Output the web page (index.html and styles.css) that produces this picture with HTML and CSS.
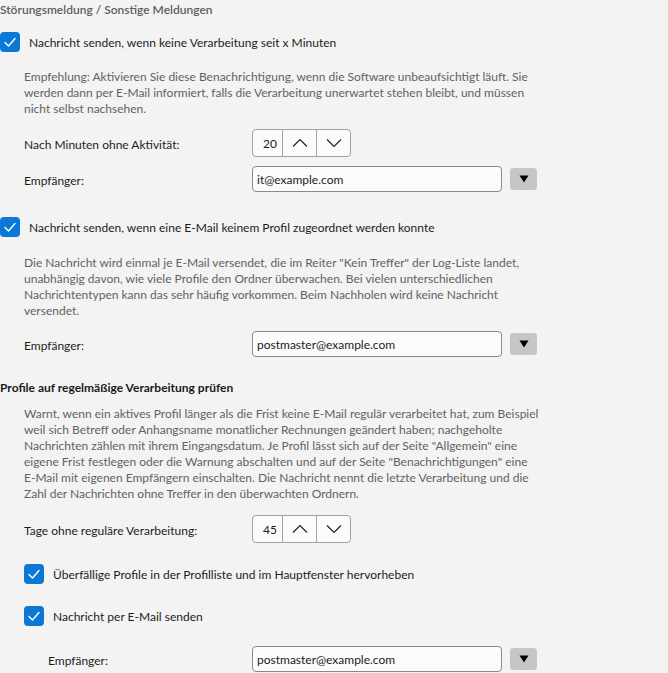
FILE: index.html
```html
<!DOCTYPE html>
<html lang="de">
<head>
<meta charset="utf-8">
<title>Störungsmeldung</title>
<link rel="stylesheet" href="styles.css">
</head>
<body>
<div class="page">
  <div class="title">Störungsmeldung / Sonstige Meldungen</div>

  <div class="check c1">
    <span class="box"><svg viewBox="0 0 20 20" width="20" height="20"><polyline points="5,10.5 8.5,14 15,6.5" fill="none" stroke="#fff" stroke-width="1.4" stroke-linecap="round" stroke-linejoin="round"/></svg></span>
    <span class="clabel">Nachricht senden, wenn keine Verarbeitung seit x Minuten</span>
  </div>

  <p class="note n1">Empfehlung: Aktivieren Sie diese Benachrichtigung, wenn die Software unbeaufsichtigt läuft. Sie<br>werden dann per E-Mail informiert, falls die Verarbeitung unerwartet stehen bleibt, und müssen<br>nicht selbst nachsehen.</p>

  <div class="field f-spin1">
    <span class="flabel">Nach Minuten ohne Aktivität:</span>
    <div class="spin">
      <span class="num">20</span>
      <span class="arrow"><svg viewBox="0 0 16 10" width="16" height="10"><polyline points="1,8.5 8,1.5 15,8.5" fill="none" stroke="#222" stroke-width="1.2"/></svg></span>
      <span class="arrow"><svg viewBox="0 0 16 10" width="16" height="10"><polyline points="1,1.5 8,8.5 15,1.5" fill="none" stroke="#222" stroke-width="1.2"/></svg></span>
    </div>
  </div>

  <div class="field f-rec1">
    <span class="flabel">Empfänger:</span>
    <div class="combo">
      <div class="input">it@example.com</div>
      <span class="ddbtn"><svg viewBox="0 0 10 8" width="10" height="8"><polygon points="0.5,0.5 9.5,0.5 5,7.5" fill="#000"/></svg></span>
    </div>
  </div>

  <div class="check c2">
    <span class="box"><svg viewBox="0 0 20 20" width="20" height="20"><polyline points="5,10.5 8.5,14 15,6.5" fill="none" stroke="#fff" stroke-width="1.4" stroke-linecap="round" stroke-linejoin="round"/></svg></span>
    <span class="clabel">Nachricht senden, wenn eine E-Mail keinem Profil zugeordnet werden konnte</span>
  </div>

  <p class="note n2">Die Nachricht wird einmal je E-Mail versendet, die im Reiter "Kein Treffer" der Log-Liste landet,<br>unabhängig davon, wie viele Profile den Ordner überwachen. Bei vielen unterschiedlichen<br>Nachrichtentypen kann das sehr häufig vorkommen. Beim Nachholen wird keine Nachricht<br>versendet.</p>

  <div class="field f-rec2">
    <span class="flabel">Empfänger:</span>
    <div class="combo">
      <div class="input">postmaster@example.com</div>
      <span class="ddbtn"><svg viewBox="0 0 10 8" width="10" height="8"><polygon points="0.5,0.5 9.5,0.5 5,7.5" fill="#000"/></svg></span>
    </div>
  </div>

  <div class="heading">Profile auf regelmäßige Verarbeitung prüfen</div>

  <p class="note n3">Warnt, wenn ein aktives Profil länger als die Frist keine E-Mail regulär verarbeitet hat, zum Beispiel<br>weil sich Betreff oder Anhangsname monatlicher Rechnungen geändert haben; nachgeholte<br>Nachrichten zählen mit ihrem Eingangsdatum. Je Profil lässt sich auf der Seite "Allgemein" eine<br>eigene Frist festlegen oder die Warnung abschalten und auf der Seite "Benachrichtigungen" eine<br>E-Mail mit eigenen Empfängern einschalten. Die Nachricht nennt die letzte Verarbeitung und die<br>Zahl der Nachrichten ohne Treffer in den überwachten Ordnern.</p>

  <div class="field f-spin2">
    <span class="flabel">Tage ohne reguläre Verarbeitung:</span>
    <div class="spin">
      <span class="num">45</span>
      <span class="arrow"><svg viewBox="0 0 16 10" width="16" height="10"><polyline points="1,8.5 8,1.5 15,8.5" fill="none" stroke="#222" stroke-width="1.2"/></svg></span>
      <span class="arrow"><svg viewBox="0 0 16 10" width="16" height="10"><polyline points="1,1.5 8,8.5 15,1.5" fill="none" stroke="#222" stroke-width="1.2"/></svg></span>
    </div>
  </div>

  <div class="check c3 indent">
    <span class="box"><svg viewBox="0 0 20 20" width="20" height="20"><polyline points="5,10.5 8.5,14 15,6.5" fill="none" stroke="#fff" stroke-width="1.4" stroke-linecap="round" stroke-linejoin="round"/></svg></span>
    <span class="clabel">Überfällige Profile in der Profilliste und im Hauptfenster hervorheben</span>
  </div>

  <div class="check c4 indent">
    <span class="box"><svg viewBox="0 0 20 20" width="20" height="20"><polyline points="5,10.5 8.5,14 15,6.5" fill="none" stroke="#fff" stroke-width="1.4" stroke-linecap="round" stroke-linejoin="round"/></svg></span>
    <span class="clabel">Nachricht per E-Mail senden</span>
  </div>

  <div class="field f-rec3 deep">
    <span class="flabel">Empfänger:</span>
    <div class="combo">
      <div class="input">postmaster@example.com</div>
      <span class="ddbtn"><svg viewBox="0 0 10 8" width="10" height="8"><polygon points="0.5,0.5 9.5,0.5 5,7.5" fill="#000"/></svg></span>
    </div>
  </div>
</div>
</body>
</html>
```

FILE: styles.css
```css
html, body {
  margin: 0;
  padding: 0;
  background: #f3f3f3;
}
body {
  font-family: Lato, "Open Sans", sans-serif;
  font-size: 12px;
  color: #1c1c1c;
  width: 668px;
  height: 673px;
  overflow: hidden;
}
.page {
  display: flex;
  flex-direction: column;
}
.title {
  padding-top: 2px;
  line-height: 16px;
  height: 16px;
  font-weight: 600;
  color: #5e5e5e;
}
.check {
  display: flex;
  align-items: center;
  height: 20px;
  line-height: 20px;
}
.check .box {
  width: 20px;
  height: 20px;
  border-radius: 4px;
  background: #0a78d4;
  display: flex;
  flex: none;
}
.check .clabel {
  margin-left: 9px;
  padding-top: 2px;
  white-space: nowrap;
}
.check.indent {
  padding-left: 24px;
}
.c1 { margin-top: 14px; }
.c2 { margin-top: 25px; }
.c3 { margin-top: 21px; }
.c4 { margin-top: 22px; }

.note {
  margin: 0;
  padding: 1px 0 0 24px;
  line-height: 16px;
  color: #626262;
  white-space: nowrap;
}
.n1 { margin-top: 16px; }
.n2 { margin-top: 17px; }
.n3 { margin-top: 9px; }

.heading {
  margin-top: 22px;
  padding-top: 1px;
  line-height: 16px;
  height: 16px;
  font-weight: 700;
  color: #1a1a1a;
}

.field {
  display: flex;
  align-items: center;
  padding-left: 24px;
}
.field .flabel {
  width: 228px;
  flex: none;
  padding-top: 2px;
  white-space: nowrap;
}
.field.deep {
  padding-left: 48px;
}
.field.deep .flabel {
  width: 204px;
}
.f-spin1 { margin-top: 12px; }
.f-rec1 { margin-top: 9px; }
.f-rec2 { margin-top: 12px; }
.f-spin2 { margin-top: 13px; }
.f-rec3 { margin-top: 20px; }

.spin {
  display: flex;
  height: 28px;
  box-sizing: border-box;
  border: 1px solid #a3a3a3;
  border-radius: 4px;
  background: #fbfbfb;
}
.spin .num {
  width: 30px;
  box-sizing: border-box;
  padding: 1px 5px 0 0;
  text-align: right;
  line-height: 25px;
  border-right: 1px solid #a3a3a3;
}
.spin .arrow {
  width: 33px;
  display: flex;
  align-items: center;
  justify-content: center;
}
.spin .arrow + .arrow {
  border-left: 1px solid #a3a3a3;
}

.combo {
  display: flex;
  align-items: center;
}
.input {
  width: 250px;
  height: 26px;
  box-sizing: border-box;
  border: 1px solid #8a8a8a;
  border-radius: 4px;
  background: #fbfbfb;
  padding: 1px 0 0 4px;
  line-height: 23px;
  white-space: nowrap;
}
.ddbtn {
  margin-left: 8px;
  width: 27px;
  height: 22px;
  border-radius: 3px;
  background: #c6c6c6;
  display: flex;
  align-items: center;
  justify-content: center;
}
```
